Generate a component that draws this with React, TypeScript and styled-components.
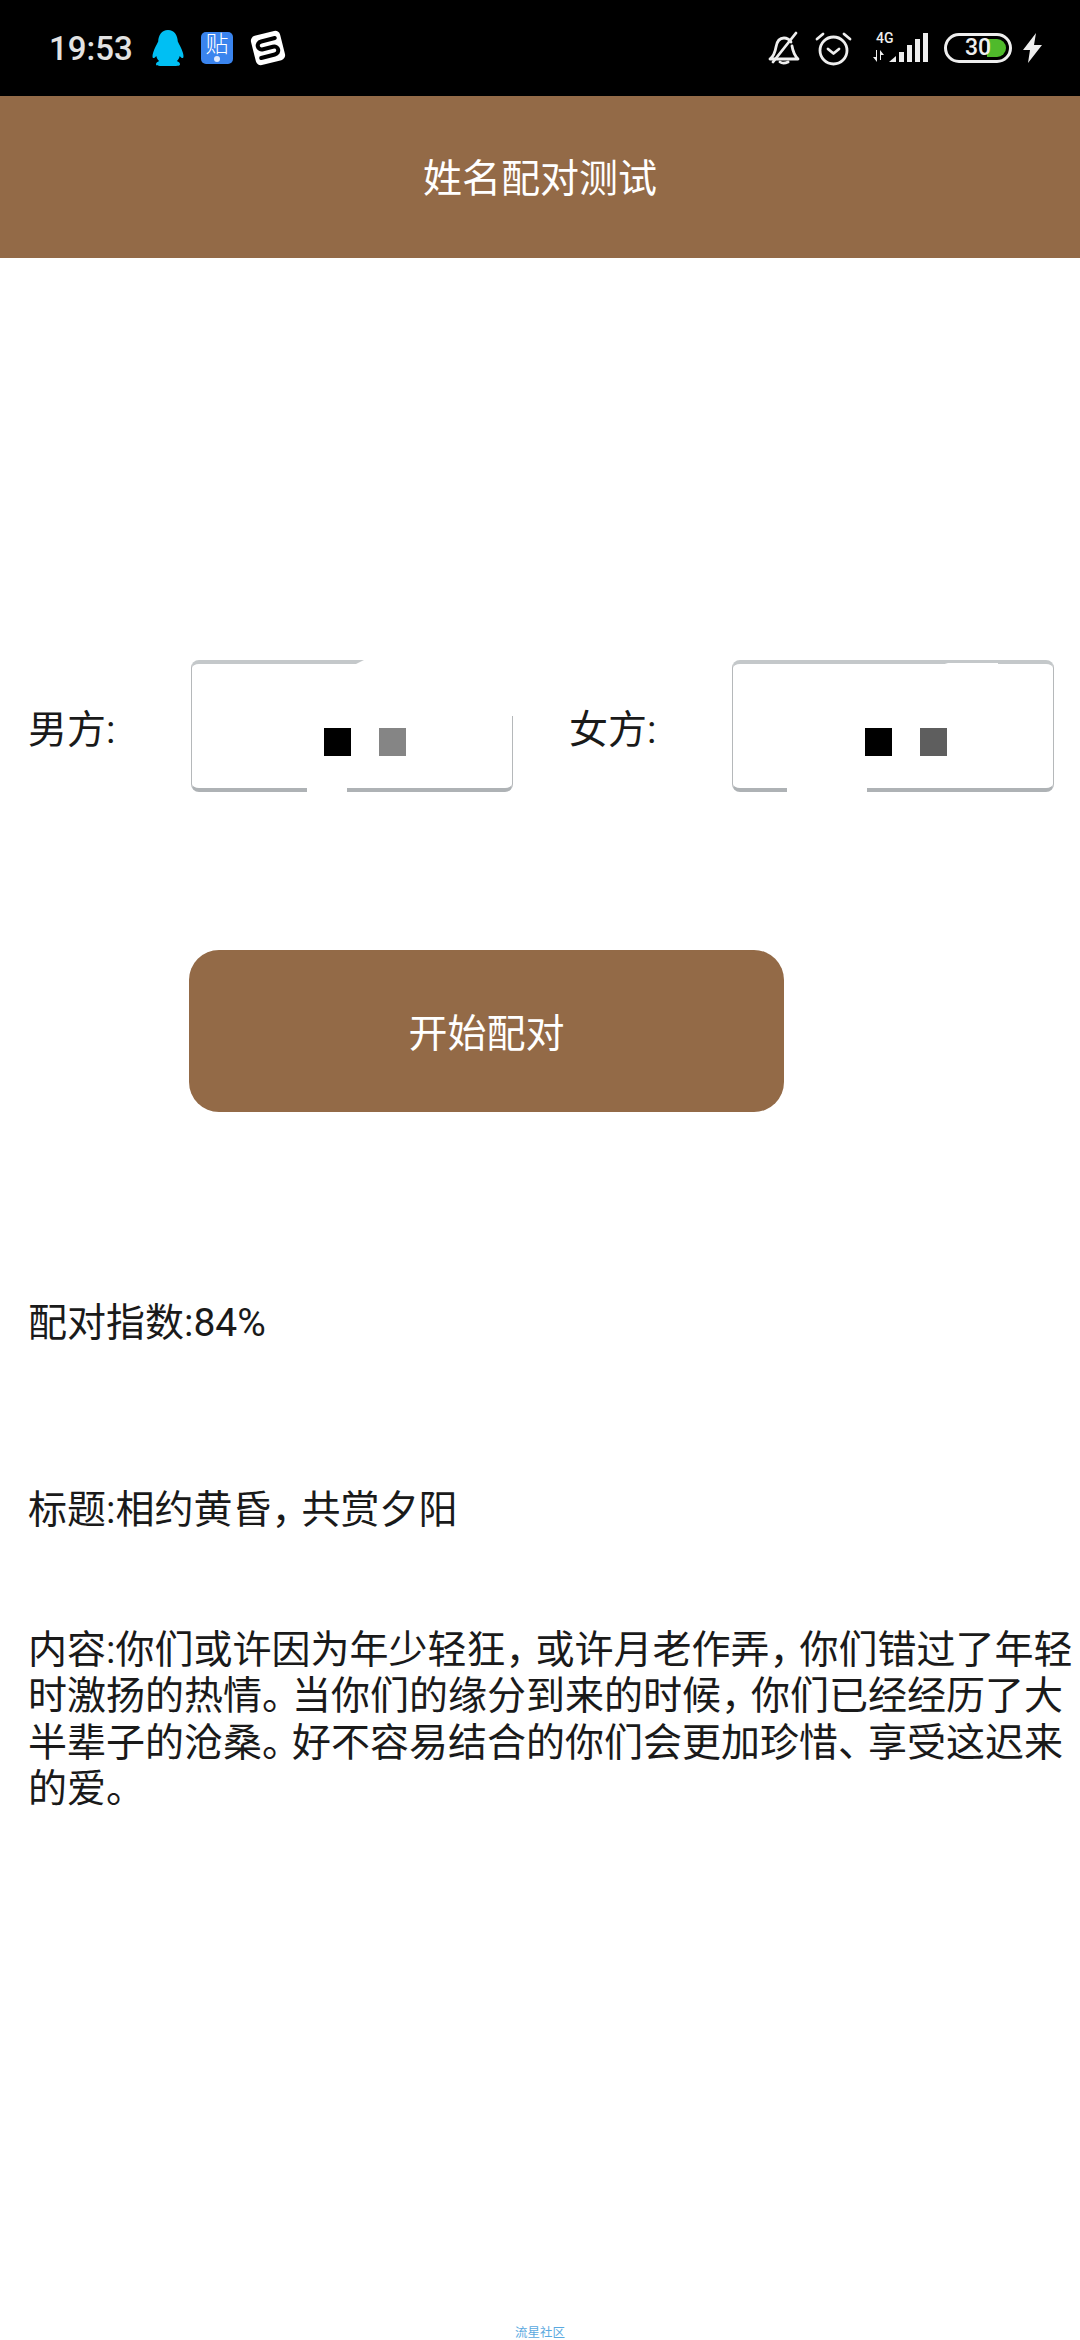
import React from "react";
import styled, { createGlobalStyle } from "styled-components";

const BROWN = "#936a47";

const GlobalStyle = createGlobalStyle`
  html, body {
    margin: 0;
    padding: 0;
    background: #fff;
  }
  * {
    box-sizing: border-box;
  }
`;

const Page = styled.div`
  position: relative;
  width: 1080px;
  height: 2340px;
  overflow: hidden;
  display: flex;
  flex-direction: column;
  background: #fff;
  color: #1a1a1a;
  font-family: Roboto, "Noto Sans CJK SC", sans-serif;
  font-weight: 400;
`;

const StatusBar = styled.div`
  height: 96px;
  flex: none;
  display: flex;
  align-items: center;
  justify-content: space-between;
  padding: 0 38px 0 49px;
  background: #000;
`;

const StatusGroup = styled.div`
  display: flex;
  align-items: center;
`;

const Clock = styled.span`
  width: 103px;
  font-size: 33px;
  font-weight: 500;
  color: #e2e2e2;
`;

const Tile = styled.div`
  position: relative;
  width: 32px;
  height: 32px;
  margin: 0 17px;
  border-radius: 5px;
  background: #3a84ee;
  color: #fff;
  font-size: 23px;
  font-weight: 300;
  line-height: 26px;
  text-align: center;
`;

const TileDot = styled.span`
  position: absolute;
  left: 13px;
  bottom: 2px;
  width: 6px;
  height: 6px;
  border-radius: 50%;
  background: #dfeaff;
`;

const IconGap = styled.span`
  width: 14px;
`;

const NetworkLabel = styled.span`
  position: absolute;
  left: 4px;
  top: -3px;
  font-size: 14px;
  font-weight: 500;
  line-height: 16px;
  color: #eee;
`;

const Network = styled.div`
  position: relative;
  width: 57px;
  height: 30px;
  margin: 0 15px 0 20px;
`;

const Battery = styled.div`
  position: relative;
  width: 68px;
  height: 30px;
  margin-right: 11px;
  border: 3px solid #eee;
  border-radius: 15px;
`;

const BatteryFill = styled.span`
  position: absolute;
  right: 3px;
  top: 3px;
  width: 19px;
  height: 18px;
  border-radius: 0 9px 9px 0;
  background: #4fba2b;
`;

const BatteryValue = styled.span`
  position: absolute;
  left: 18px;
  top: 0;
  font-size: 23px;
  font-weight: 500;
  line-height: 24px;
  color: #eee;
`;

const Header = styled.header`
  height: 162px;
  flex: none;
  display: flex;
  align-items: center;
  justify-content: center;
  padding-bottom: 5px;
  background: ${BROWN};
  color: #fff;
  font-size: 39px;
`;

const Main = styled.main`
  flex: 1;
  padding: 402px 0 0 28px;
  font-size: 39px;
`;

const FormRow = styled.div`
  display: flex;
  align-items: flex-start;
`;

const NameField = styled.div`
  display: flex;
  flex: none;
  margin-right: 56px;
`;

const FieldLabel = styled.label`
  width: 163px;
  padding-top: 41px;
  font-size: 39px;
  line-height: 58px;
`;

const InputBox = styled.div`
  position: relative;
  width: 322px;
  height: 132px;
  border: 1px solid #b5b8ba;
  border-top: 4px solid #c4c8ca;
  border-bottom: 4px solid #aeb2b5;
  border-radius: 8px;
  background: #fff;
`;

const Smudge = styled.span<{ $left: number; $top: number; $width: number; $height: number; $cut: number }>`
  position: absolute;
  left: ${(p) => p.$left}px;
  top: ${(p) => p.$top}px;
  width: ${(p) => p.$width}px;
  height: ${(p) => p.$height}px;
  background: #fff;
  clip-path: polygon(${(p) => p.$cut}px 0, 100% 0, 100% 100%, 0 100%);
`;

const Mask = styled.span<{ $left: number; $shade: string }>`
  position: absolute;
  left: ${(p) => p.$left}px;
  top: 64px;
  width: 27px;
  height: 28px;
  background: ${(p) => p.$shade};
`;

const StartButton = styled.button`
  display: block;
  width: 595px;
  height: 162px;
  margin: 158px 0 0 161px;
  padding: 0 0 3px;
  border: none;
  border-radius: 30px;
  background: ${BROWN};
  color: #fff;
  font: inherit;
  font-size: 39px;
`;

const ScoreLine = styled.p`
  margin: 188px 0 0;
  line-height: 46px;
`;

const TitleLine = styled.p`
  margin: 141px 0 0;
  line-height: 46px;
`;

const Description = styled.p`
  width: 1052px;
  margin: 94px 0 0;
  line-height: 46.4px;
`;

const Punct = styled.span`
  letter-spacing: -9px;
`;

const SiteMark = styled.div`
  position: absolute;
  left: 0;
  right: 0;
  bottom: 0;
  text-align: center;
  font-size: 12.5px;
  line-height: 14px;
  color: #5aa9e0;
`;

const withPunct = (text: string) =>
  text.split(/([，。、])/).map((part, i) => (i % 2 ? <Punct key={i}>{part}</Punct> : part));

const Penguin = () => (
  <svg width="32" height="37" viewBox="0 0 32 37">
    <path
      fill="#00bff3"
      d="M16 0c6.500 0 9.600 5.400 9.800 11.500 1.800 3.500 3.700 7 5 11 .8 2.600 1 4.800.2 5.400-.8.500-2.300-.6-3.300-2-.6 2.400-1.500 4-3 5.200 2.200.8 3.500 2 3.300 3.500-.2 1.200-2 1.400-4 1.400H8c-2 0-3.800-.2-4-1.400-.2-1.500 1.100-2.700 3.300-3.500-1.500-1.200-2.400-2.800-3-5.200-1 1.400-2.500 2.500-3.300 2-.8-.6-.6-2.800.2-5.400 1.300-4 3.200-7.500 5-11C6.400 5.400 9.500 0 16 0z"
    />
  </svg>
);

const SogouMark = () => (
  <svg width="36" height="36" viewBox="0 0 36 36">
    <g transform="rotate(-14 18 18)">
      <rect x="3" y="3" width="30" height="30" rx="5" fill="#fff" />
      <path
        fill="none"
        stroke="#000"
        strokeWidth="4"
        strokeLinecap="round"
        d="M27 10H13c-6 0-6 8 0 8h10c6 0 6 8 0 8H9"
      />
    </g>
  </svg>
);

const BellOff = () => (
  <svg width="34" height="34" viewBox="0 0 34 34" fill="none" stroke="#eee" strokeWidth="2.800" strokeLinecap="round" strokeLinejoin="round">
    <path d="M3 28c4-3 5-6 6-12 1-6 4-9 8-9 3 0 5 1 7 4M25 15c1 6 3 10 6 13H3" />
    <path d="M13 31c2 1.500 5 1.500 8 0" />
    <path d="M29 2 6 31" />
  </svg>
);

const AlarmClock = () => (
  <svg width="37" height="35" viewBox="0 0 37 35" fill="none" stroke="#eee" strokeWidth="2.800" strokeLinecap="round" strokeLinejoin="round">
    <circle cx="18.500" cy="19.500" r="13.500" />
    <path d="M13 18l5.500 4.500L24 18" />
    <path d="M2 8l6-5M35 8l-6-5" />
  </svg>
);

const SignalBars = () => (
  <svg width="57" height="30" viewBox="0 0 57 30">
    <g fill="#eee">
      <path d="M4 17v7H1l4 5V17zM8 27V17l4 5H9v5z" />
      <path d="M17 29l7-6v6z" />
      <rect x="27" y="19" width="5" height="10" />
      <rect x="35" y="12" width="5" height="17" />
      <rect x="43" y="6" width="5" height="23" />
      <rect x="51" y="0" width="5" height="29" />
    </g>
  </svg>
);

const Bolt = () => (
  <svg width="19" height="30" viewBox="0 0 19 30">
    <path fill="#eee" d="M13 0 0 17h7L5 30 19 12h-8z" />
  </svg>
);

// white patches left by the blur over the original inputs: left, top, width, height, slant
const fields = [
  {
    label: "男方:",
    shade: "#858585",
    smudges: [
      [154, -5, 170, 10, 20],
      [115, 122, 40, 10, 0],
      [300, 2, 24, 50, 0],
    ],
  },
  {
    label: "女方:",
    shade: "#5e5e5e",
    smudges: [
      [205, -1, 60, 3, 10],
      [54, 122, 80, 10, 0],
    ],
  },
];

const App = () => {
  return (
    <Page>
      <GlobalStyle />
      <StatusBar>
        <StatusGroup>
          <Clock>19:53</Clock>
          <Penguin />
          <Tile>
            贴
            <TileDot />
          </Tile>
          <SogouMark />
        </StatusGroup>
        <StatusGroup>
          <BellOff />
          <IconGap />
          <AlarmClock />
          <Network>
            <NetworkLabel>4G</NetworkLabel>
            <SignalBars />
          </Network>
          <Battery>
            <BatteryFill />
            <BatteryValue>30</BatteryValue>
          </Battery>
          <Bolt />
        </StatusGroup>
      </StatusBar>
      <Header>姓名配对测试</Header>
      <Main>
        <FormRow>
          {fields.map((field) => (
            <NameField key={field.label}>
              <FieldLabel>{field.label}</FieldLabel>
              <InputBox>
                {field.smudges.map(([left, top, width, height, cut]) => (
                  <Smudge key={left} $left={left} $top={top} $width={width} $height={height} $cut={cut} />
                ))}
                <Mask $left={132} $shade="#000" />
                <Mask $left={187} $shade={field.shade} />
              </InputBox>
            </NameField>
          ))}
        </FormRow>
        <StartButton>开始配对</StartButton>
        <ScoreLine>配对指数:84%</ScoreLine>
        <TitleLine>{withPunct("标题:相约黄昏，共赏夕阳")}</TitleLine>
        <Description>
          {withPunct(
            "内容:你们或许因为年少轻狂，或许月老作弄，你们错过了年轻时激扬的热情。当你们的缘分到来的时候，你们已经经历了大半辈子的沧桑。好不容易结合的你们会更加珍惜、享受这迟来的爱。"
          )}
        </Description>
      </Main>
      <SiteMark>流星社区</SiteMark>
    </Page>
  );
};

export default App;
